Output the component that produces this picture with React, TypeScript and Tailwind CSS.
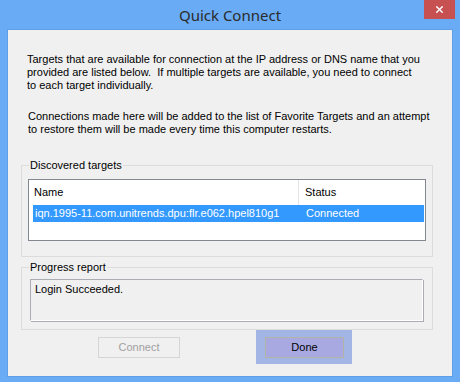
import { X } from "lucide-react";

const FONT = "font-['Liberation_Sans',Arial,sans-serif]";

export default function App() {
  return (
    <div className={`w-[460px] h-[382px] bg-[#69acf5] flex flex-col ${FONT} text-[11px] leading-[13px] text-black`}>
      {/* Title bar */}
      <div className="relative h-[29px] flex items-center justify-center">
        <span className="text-[15px] leading-[18px] text-[#2b2b2b] font-['Noto_Sans',sans-serif]">Quick Connect</span>
        <button className="absolute right-[5px] top-0 w-[31px] h-[19px] bg-[#c75050] flex items-center justify-center">
          <X className="w-[11px] h-[11px] text-white" strokeWidth={3} />
        </button>
      </div>

      {/* Client area */}
      <div className="mx-[7px] w-[446px] h-[348px] bg-[#f0f0f0] border border-[#5f9fe6] flex flex-col">
        <p className="ml-[19px] mt-[23px]">
          Targets that are available for connection at the IP address or DNS name that you
          <br />
          provided are listed below.&nbsp; If multiple targets are available, you need to connect
          <br />
          to each target individually.
        </p>
        <p className="ml-[20px] mt-[18px]">
          Connections made here will be added to the list of Favorite Targets and an attempt
          <br />
          to restore them will be made every time this computer restarts.
        </p>

        {/* Discovered targets */}
        <fieldset className="ml-[13px] mt-[23px] w-[412px] border border-[#dcdcdc]">
          <legend className="ml-[7px] px-[1px] leading-[13px]">Discovered targets</legend>
          <div className="ml-[6px] mt-[7px] mb-[15px] w-[398px] h-[62px] border border-[#828790] bg-white flex flex-col">
            <div className="h-[25px] flex items-stretch">
              <div className="w-[270px] pl-[5px] flex items-center border-r border-[#e5e5e5]">Name</div>
              <div className="pl-[6px] flex items-center">Status</div>
            </div>
            <div className="ml-[4px] mr-[1px] h-[17px] bg-[#3399ff] text-white flex items-center">
              <div className="w-[266px] pl-[2px]">iqn.1995-11.com.unitrends.dpu:flr.e062.hpel810g1</div>
              <div className="pl-[7px]">Connected</div>
            </div>
          </div>
        </fieldset>

        {/* Progress report */}
        <fieldset className="ml-[13px] mt-[4px] w-[412px] border border-[#dcdcdc]">
          <legend className="ml-[7px] px-[1px] leading-[13px]">Progress report</legend>
          <div className="ml-[8px] mt-[5px] mb-[8px] w-[393px] h-[42px] border border-[#abadb3] border-r-white border-b-white shadow-[1px_1px_0_#abadb3] pl-[4px] pt-[3px]">
            Login Succeeded.
          </div>
        </fieldset>

        {/* Buttons */}
        <div className="flex items-start mt-[7px]">
          <button className="ml-[90px] w-[82px] h-[21px] border border-[#d5d5d5] bg-[#f0f0f0] text-[#a0a0a0]">
            Connect
          </button>
          <div className="ml-[76px] -mt-[7px] pl-[9px] pr-[8px] pt-[7px] pb-[6px] bg-[#a3b5e4]">
            <button className="w-[79px] h-[21px] border border-[#b3b3a8] bg-[#a9a9e2] text-black">Done</button>
          </div>
        </div>
      </div>
    </div>
  );
}
